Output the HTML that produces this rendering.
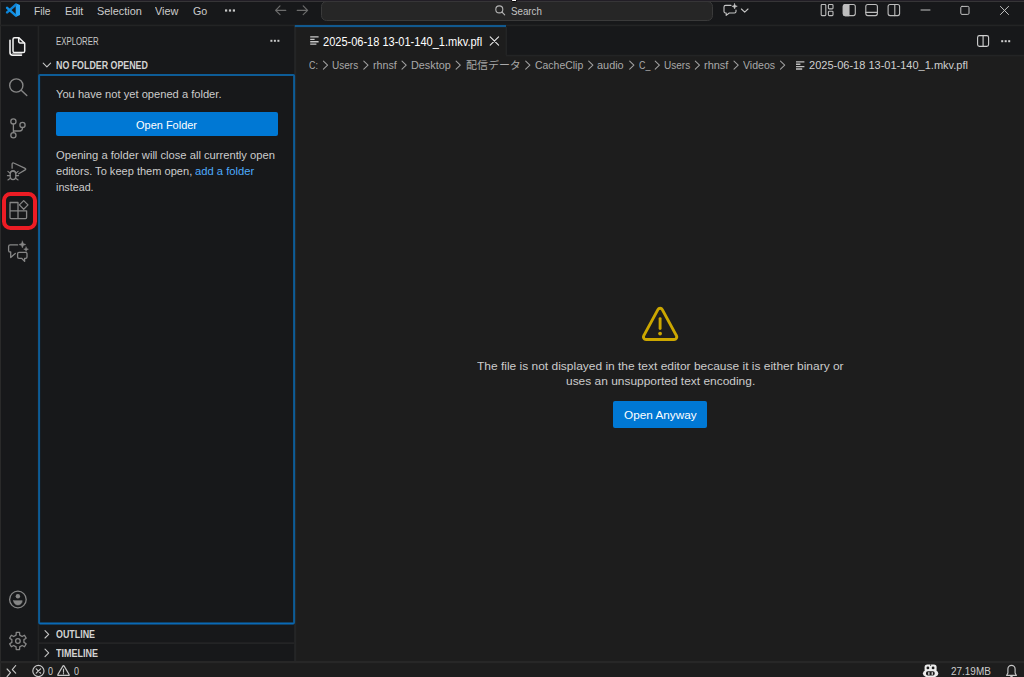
<!DOCTYPE html>
<html lang="en">
<head>
<meta charset="utf-8">
<title>2025-06-18 13-01-140_1.mkv.pfl - Visual Studio Code</title>
<style>
html,body{margin:0;padding:0}
body{width:1024px;height:677px;overflow:hidden;background:#17181a;position:relative;
 font-family:"Liberation Sans","Noto Sans CJK JP",sans-serif;color:#ccc;-webkit-font-smoothing:antialiased}
div,span,a,button,svg{position:absolute;box-sizing:border-box}
.t{white-space:nowrap;line-height:20px;transform-origin:0 0;display:block}
#titlebar{left:0;top:0;width:1024px;height:26px;background:#17181a}
#winTop0{left:0;top:0;width:1024px;height:1px;background:#221e26}
#winTop1{left:0;top:1px;width:1024px;height:1px;background:#363537}
#winLeft{left:0;top:1px;width:1px;height:676px;background:#2a2a2a}
#cursor{left:511px;top:0;width:6px;height:2px;background:#fff;border:1px solid #000;border-top:0;border-radius:0 0 2px 2px}
#cmd{left:321px;top:1px;width:392px;height:20px;background:#262626;border:1px solid #3a3a3a;border-radius:5.5px}
#activity{left:0;top:26px;width:39px;height:635px;background:#17181a}
#sidebar{left:39px;top:26px;width:256px;height:635px;background:#17181a}
#focus{left:-1px;top:48px;width:257px;height:550px}
#openFolder{left:16.5px;top:86px;width:222.5px;height:24px;background:#0078d4;border-radius:2px;border:0;padding:0}
#outlineHdr{left:0;top:598px;width:255px;height:19px}
#timelineHdr{left:0;top:617px;width:255px;height:18px}
#editor{left:295px;top:26px;width:729px;height:635px;background:#1d1d1d}
#tabs{left:0;top:0;width:729px;height:30px;background:#17181a}
#tab{left:0;top:0;width:210.5px;height:30px;background:#1d1d1d}
#openAnyway{left:318px;top:374.7px;width:94px;height:27px;background:#0078d4;border-radius:2px;border:0;padding:0}
#status{left:0;top:661px;width:1024px;height:16px;background:#1d1d1d}
#icons{left:0;top:0;width:1024px;height:677px;pointer-events:none}
#annot{left:2.2px;top:191.5px;width:34.7px;height:38.8px;border:4.5px solid #ed1c24;border-radius:8.5px}

</style>
</head>
<body>
<div id="titlebar"></div>
<div id="cmd"></div>
<div id="activity"></div>
<div id="sidebar">
  <div id="outlineHdr"></div>
  <div id="timelineHdr"></div>
  <div id="focus"></div>
  <button id="openFolder"></button>
</div>
<div id="editor">
  <div id="tabs"><div id="tab"></div></div>
  <button id="openAnyway"></button>
</div>
<div id="status"></div>
<div id="winTop0"></div><div id="winTop1"></div><div id="winLeft"></div>
<div id="cursor"></div>
<div id="annot"></div>
<svg id="icons" width="1024" height="677" viewBox="0 0 1024 677" fill="none" stroke-linecap="round" stroke-linejoin="round">
<g stroke="none" fill="#232425">
<rect x="0" y="24.6" width="1024" height="1.6"/>
<rect x="37.6" y="26" width="1.6" height="635.5"/>
<rect x="294.1" y="26" width="2.1" height="635.5" fill="#242526"/>
<rect x="39" y="642.2" width="255.2" height="1.9"/>
<rect x="505.5" y="27" width="1.5" height="28" />
<rect x="506" y="54.8" width="518" height="1.6"/>
<rect x="0" y="661" width="1024" height="2.1" fill="#272727"/>
</g>
<rect x="294.8" y="25" width="211.2" height="2.1" fill="#11598f" stroke="none"/>
<rect x="39.1" y="74.9" width="255" height="548.5" rx="0.8" stroke="#0d5c97" stroke-width="2" stroke-linejoin="miter"/>
<rect x="39.5" y="622.8" width="254.2" height="1.4" fill="#0a69b6" stroke="none"/>
<g stroke="none">
<path d="M15.7 3.2 L20 5.1 V15.1 L15.7 17 Z" fill="#27a0f0"/>
</g>
<path d="M15.6 4.9 L7.1 12.4" stroke="#0c84d8" stroke-width="2.5"/>
<path d="M15.6 15.4 L7.1 7.9" stroke="#0f8fe4" stroke-width="2.5"/>
<g fill="#c8c8c8" stroke="none"><rect x="225" y="9.4" width="2.2" height="2.2"/><rect x="228.9" y="9.4" width="2.2" height="2.2"/><rect x="232.8" y="9.4" width="2.2" height="2.2"/></g>
<g stroke="#6c6c6c" stroke-width="1.2"><path d="M285.8 10.3 H275.6 M280 5.9 L275.6 10.3 L280 14.7"/><path d="M297.2 10.3 H307.6 M303.2 5.9 L307.6 10.3 L303.2 14.7"/></g>
<g stroke="#b4b4b4" stroke-width="1.1"><circle cx="499.3" cy="9.4" r="3.5"/><path d="M501.9 12 L504.7 14.8"/></g>
<g stroke="#c5c5c5" stroke-width="1.1"><path d="M731 5.4 H725.6 a1.6 1.6 0 0 0 -1.6 1.6 V11.4 a1.6 1.6 0 0 0 1.6 1.6 H726.2 V15.4 L729.3 13 H734.4 a1.6 1.6 0 0 0 1.6 -1.6 V10"/><path d="M734.6 3.6 L735.3 5.6 L737.3 6.3 L735.3 7 L734.6 9 L733.9 7 L731.9 6.3 L733.9 5.6 Z" fill="#c5c5c5" stroke-width="0.5"/><path d="M741.4 9 L744.7 12.2 L748 9"/></g>
<g stroke="#bdbdbd" stroke-width="1.1">
<rect x="821.2" y="4.5" width="4.6" height="11.1" rx="0.8"/><rect x="828.4" y="4.5" width="4.6" height="4.4" rx="0.8"/><rect x="828.4" y="11.3" width="4.6" height="4.3" rx="0.8"/>
<rect x="843.3" y="4.5" width="12" height="11.1" rx="2"/><path d="M845.3 4.5 H849 V15.6 H845.3 a2 2 0 0 1 -2 -2 V6.5 a2 2 0 0 1 2 -2 Z" fill="#bdbdbd"/>
<rect x="865.8" y="4.5" width="11.6" height="11.1" rx="2"/><path d="M865.8 12.4 H877.4"/>
<rect x="888.1" y="4.5" width="11.5" height="11.1" rx="2"/><path d="M894.8 4.5 V15.6"/>
</g>
<g stroke="#c2c2c2" stroke-width="1"><path d="M921 10 H930"/><rect x="960.8" y="6.4" width="8.2" height="8" rx="1.2"/><path d="M1000.2 6.1 L1008.8 14.8 M1008.8 6.1 L1000.2 14.8" stroke-linecap="butt"/></g>
<g stroke="#f2f2f2" stroke-width="1.5"><path d="M14.6 37.7 H18.9 L24.7 43.2 V50.9 a1.6 1.6 0 0 1 -1.6 1.6 H14.6 a1.6 1.6 0 0 1 -1.6 -1.6 V39.3 a1.6 1.6 0 0 1 1.6 -1.6 Z"/><path d="M18.7 37.9 V41.6 a1.4 1.4 0 0 0 1.4 1.4 H24.4"/><path d="M10 40.2 V52.6 a2.6 2.6 0 0 0 2.6 2.6 H21.4" stroke-width="1.6"/><path d="M12.6 54 H21.6" stroke="#b8b8b8" stroke-width="1.3"/></g>
<g stroke="#868686" stroke-width="1.4"><circle cx="16.3" cy="85.5" r="6.6"/><path d="M21.2 90.3 L26.8 95.6"/></g>
<g stroke="#868686" stroke-width="1.3"><circle cx="13.4" cy="121.4" r="2.6"/><circle cx="13.4" cy="135.3" r="2.6"/><circle cx="22.5" cy="124.9" r="2.6"/><path d="M13.4 124.1 V132.6"/><path d="M22.5 127.6 V128 a3 3 0 0 1 -3 3 H13.6"/></g>
<g stroke="#868686" stroke-width="1.3"><path d="M12.1 168.2 V164 a1.1 1.1 0 0 1 1.6 -1 L25.2 168.4 a0.8 0.8 0 0 1 0 1.5 L18.7 173.7"/><path d="M10.2 174 a2.8 2.8 0 0 1 5.6 0 V176.8 a2.8 2.8 0 0 1 -5.6 0 Z"/><path d="M10.6 172.4 a2.5 2.5 0 0 1 4.8 0" /><path d="M10.2 173.2 L7.9 171.4 M15.8 173.2 L18.1 171.4 M10.2 175.6 H7.4 M15.8 175.6 H18.6 M10.4 178.2 L7.9 180 M15.6 178.2 L18.1 180" stroke-width="1.1"/></g>
<g stroke="#868686" stroke-width="1.3"><path d="M10 202.5 H18 V218.6 H11 a1 1 0 0 1 -1 -1 V203.5 a1 1 0 0 1 1 -1 Z M10 210.8 H26.6 V217.6 a1 1 0 0 1 -1 1 H18"/><path d="M23.7 200.6 L28 204.9 L23.7 209.2 L19.4 204.9 Z"/></g>
<g stroke="#868686" stroke-width="1.3"><path d="M17.6 244.9 H10.2 a1.6 1.6 0 0 0 -1.6 1.6 V250.4 a1.6 1.6 0 0 0 1.6 1.6 H10.7 V257.5 L15.3 253.4"/><path d="M19 252.4 H25.6 a1.4 1.4 0 0 1 1.4 1.4 V256.9 a1.4 1.4 0 0 1 -1.4 1.4 H24.6 V261.4 L21.6 258.3 H19 a1.4 1.4 0 0 1 -1.4 -1.4 V253.8 a1.4 1.4 0 0 1 1.4 -1.4 Z"/><path d="M22.4 241 L23.4 243.5 L25.9 244.5 L23.4 245.5 L22.4 248 L21.4 245.5 L18.9 244.5 L21.4 243.5 Z" fill="#868686" stroke-width="0.4"/><path d="M26.1 246.8 L26.8 248.5 L28.5 249.2 L26.8 249.9 L26.1 251.6 L25.4 249.9 L23.7 249.2 L25.4 248.5 Z" fill="#868686" stroke-width="0.4"/></g>
<g stroke="#868686" stroke-width="1.3"><circle cx="17.9" cy="599.5" r="8.3"/><circle cx="17.9" cy="596.3" r="2.2" fill="#868686" stroke="none"/><path d="M13.6 600.7 H22.2 a4.3 4.3 0 0 1 -8.6 0 Z" fill="#868686" stroke-width="0.6"/></g>
<g stroke="#868686" stroke-width="1.3"><path d="M16.09 635.07 L16.24 632.46 L19.56 632.46 L19.71 635.07 L22.13 636.47 L24.47 635.29 L26.13 638.17 L23.94 639.61 L23.94 642.39 L26.13 643.83 L24.47 646.71 L22.13 645.53 L19.71 646.93 L19.56 649.54 L16.24 649.54 L16.09 646.93 L13.67 645.53 L11.33 646.71 L9.67 643.83 L11.86 642.39 L11.86 639.61 L9.67 638.17 L11.33 635.29 L13.67 636.47 Z"/><circle cx="17.9" cy="641.0" r="2.3"/></g>
<g fill="#c8c8c8" stroke="none"><rect x="270.4" y="39.8" width="2" height="2"/><rect x="273.9" y="39.8" width="2" height="2"/><rect x="277.4" y="39.8" width="2" height="2"/></g>
<g stroke="#c5c5c5" stroke-width="1.1"><path d="M43.2 63.2 L46.9 66.9 L50.6 63.2"/><path d="M45 630.6 L48.7 634.3 L45 638"/><path d="M45 649.2 L48.7 652.9 L45 656.6"/></g>
<g stroke="#c8c8c8" stroke-width="1.35" stroke-linecap="butt"><path d="M310.2 36.90 H318.60 M310.2 39.30 H314.60 M310.2 41.70 H318.60 M310.2 44.10 H316.40"/></g>
<g stroke="#c0c0c0" stroke-width="1.35" stroke-linecap="butt"><path d="M796 61.80 H804.40 M796 64.20 H800.40 M796 66.60 H804.40 M796 69.00 H802.20"/></g>
<g stroke="#e8e8e8" stroke-width="1.1"><path d="M490.2 36.8 L498.6 45.2 M498.6 36.8 L490.2 45.2"/></g>
<path d="M323.40000000000003 61.1 L327.6 65.1 L323.40000000000003 69.1 M363.8 61.1 L368.0 65.1 L363.8 69.1 M402.0 61.1 L406.2 65.1 L402.0 69.1 M456.1 61.1 L460.3 65.1 L456.1 69.1 M525.6999999999999 61.1 L529.9 65.1 L525.6999999999999 69.1 M588.6999999999999 61.1 L592.9 65.1 L588.6999999999999 69.1 M629.6999999999999 61.1 L633.9 65.1 L629.6999999999999 69.1 M655.1999999999999 61.1 L659.4 65.1 L655.1999999999999 69.1 M695.3 61.1 L699.5 65.1 L695.3 69.1 M734.0 61.1 L738.2 65.1 L734.0 69.1 M780.5 61.1 L784.7 65.1 L780.5 69.1" stroke="#a0a0a0" stroke-width="1.05"/>
<g stroke="#d0d0d0" stroke-width="1.1"><rect x="977.6" y="35.6" width="11" height="10.8" rx="1.8"/><path d="M983.1 35.6 V46.4"/></g>
<g fill="#d0d0d0" stroke="none"><rect x="1001.2" y="40.2" width="2" height="2"/><rect x="1004.7" y="40.2" width="2" height="2"/><rect x="1008.2" y="40.2" width="2" height="2"/></g>
<g stroke="#cca700" stroke-width="2.9"><path d="M657.9 309.6 a2.5 2.5 0 0 1 4.4 0 L676.4 335.6 a2.6 2.6 0 0 1 -2.3 3.9 H646.1 a2.6 2.6 0 0 1 -2.3 -3.9 Z"/><path d="M660.1 318.6 V328.6" stroke-width="2.9"/></g><circle cx="660.1" cy="333.6" r="1.9" fill="#cca700"/>
<g stroke="#c8c8c8" stroke-width="1.15"><path d="M15.7 665.5 L12.3 669.6 L15.7 673.2"/><path d="M7.1 669 L10.5 672.6 L7.1 676.6"/>
<circle cx="38.4" cy="671" r="5.6"/><path d="M36.2 668.8 L40.6 673.2 M40.6 668.8 L36.2 673.2"/>
<path d="M63 665.9 a0.6 0.6 0 0 1 1 0 L69.2 674.6 a0.5 0.5 0 0 1 -0.4 0.8 H58.2 a0.5 0.5 0 0 1 -0.4 -0.8 Z"/><path d="M63.5 669 V672.2 M63.5 673.6 V673.8"/>
<path d="M1011.5 665.4 a3.6 3.6 0 0 1 3.6 3.6 V673 L1016.4 675.4 H1006.6 L1007.9 673 V669 a3.6 3.6 0 0 1 3.6 -3.6 Z"/><path d="M1010.2 675.6 a1.4 1.4 0 0 0 2.6 0" />
</g>
<g stroke="none" fill="#ececec"><rect x="924.6" y="664.6" width="12" height="7.4" rx="2.7"/><ellipse cx="930.6" cy="673.4" rx="7.7" ry="4.4"/></g>
<g stroke="none" fill="#1d1d1d"><circle cx="927.9" cy="667.9" r="1.4"/><circle cx="933.1" cy="667.9" r="1.4"/><rect x="926" y="671.3" width="8.7" height="4.1" rx="1.7"/><path d="M930.1 664.4 H931.1 V665.6 L930.6 666.1 L930.1 665.6 Z"/></g>
<g stroke="none" fill="#e0e0e0"><rect x="928.2" y="672.2" width="1.3" height="2.6"/><rect x="931.6" y="672.2" width="1.3" height="2.6"/></g>
</svg>
<span class="t" style="left:34.3px;top:1px;font-size:11.8px;color:#cccccc;transform:scaleX(0.8730)">File</span>
<span class="t" style="left:64.8px;top:1px;font-size:11.8px;color:#cccccc;transform:scaleX(0.9002)">Edit</span>
<span class="t" style="left:96.8px;top:1px;font-size:11.8px;color:#cccccc;transform:scaleX(0.9252)">Selection</span>
<span class="t" style="left:155.4px;top:1px;font-size:11.8px;color:#cccccc;transform:scaleX(0.9227)">View</span>
<span class="t" style="left:192.5px;top:1px;font-size:11.8px;color:#cccccc;transform:scaleX(0.9079)">Go</span>
<span class="t" style="left:510.6px;top:1px;font-size:11.8px;color:#c4c4c4;transform:scaleX(0.8264)">Search</span>
<span class="t" style="left:322.9px;top:32px;font-size:12px;color:#ffffff;transform:scaleX(0.9184)">2025-06-18 13-01-140_1.mkv.pfl</span>
<span class="t" style="left:309.0px;top:55px;font-size:11.8px;color:#a9a9a9;transform:scaleX(0.7534)">C:</span>
<span class="t" style="left:332.4px;top:55px;font-size:11.8px;color:#a9a9a9;transform:scaleX(0.8503)">Users</span>
<span class="t" style="left:373.2px;top:55px;font-size:11.8px;color:#a9a9a9;transform:scaleX(0.9072)">rhnsf</span>
<span class="t" style="left:411.4px;top:55px;font-size:11.8px;color:#a9a9a9;transform:scaleX(0.9173)">Desktop</span>
<span class="t" style="left:534.9px;top:55px;font-size:11.8px;color:#a9a9a9;transform:scaleX(0.8854)">CacheClip</span>
<span class="t" style="left:597.3px;top:55px;font-size:11.8px;color:#a9a9a9;transform:scaleX(0.9247)">audio</span>
<span class="t" style="left:638.7px;top:55px;font-size:11.8px;color:#a9a9a9;transform:scaleX(0.7553)">C_</span>
<span class="t" style="left:664.1px;top:55px;font-size:11.8px;color:#a9a9a9;transform:scaleX(0.8503)">Users</span>
<span class="t" style="left:704.4px;top:55px;font-size:11.8px;color:#a9a9a9;transform:scaleX(0.9263)">rhnsf</span>
<span class="t" style="left:743.1px;top:55px;font-size:11.8px;color:#a9a9a9;transform:scaleX(0.8952)">Videos</span>
<span class="t" style="left:465.5px;top:56px;font-size:10.2px;color:#a9a9a9;transform:scaleX(1.0758)">配信データ</span>
<span class="t" style="left:809.0px;top:55px;font-size:11.8px;color:#cfcfcf;transform:scaleX(0.9337)">2025-06-18 13-01-140_1.mkv.pfl</span>
<span class="t" style="left:55.8px;top:32px;font-size:10.2px;color:#c8c8c8;transform:scaleX(0.7678)">EXPLORER</span>
<span class="t" style="left:55.8px;top:56px;font-size:10.2px;color:#d4d4d4;transform:scaleX(0.8681);font-weight:700">NO FOLDER OPENED</span>
<span class="t" style="left:55.8px;top:84px;font-size:11.8px;color:#cccccc;transform:scaleX(0.9438)">You have not yet opened a folder.</span>
<span class="t" style="left:135.8px;top:115px;font-size:11.8px;color:#ffffff;transform:scaleX(0.9302)">Open Folder</span>
<span class="t" style="left:55.8px;top:145px;font-size:11.8px;color:#cccccc;transform:scaleX(0.9483)">Opening a folder will close all currently open</span>
<span class="t" style="left:55.8px;top:161px;font-size:11.8px;color:#cccccc;transform:scaleX(0.9369)">editors. To keep them open,</span>
<span class="t" style="left:195.4px;top:161px;font-size:11.8px;color:#4daafc;transform:scaleX(0.9501)">add a folder</span>
<span class="t" style="left:55.8px;top:177px;font-size:11.8px;color:#cccccc;transform:scaleX(0.9098)">instead.</span>
<span class="t" style="left:55.8px;top:625px;font-size:10.2px;color:#d4d4d4;transform:scaleX(0.8721);font-weight:700">OUTLINE</span>
<span class="t" style="left:56.3px;top:644px;font-size:10.2px;color:#d4d4d4;transform:scaleX(0.8833);font-weight:700">TIMELINE</span>
<span class="t" style="left:477.2px;top:356px;font-size:11.8px;color:#cccccc;transform:scaleX(1.0146)">The file is not displayed in the text editor because it is either binary or</span>
<span class="t" style="left:565.7px;top:371px;font-size:11.8px;color:#cccccc;transform:scaleX(1.0122)">uses an unsupported text encoding.</span>
<span class="t" style="left:624.3px;top:405px;font-size:11.8px;color:#ffffff;transform:scaleX(0.9973)">Open Anyway</span>
<span class="t" style="left:48.4px;top:661px;font-size:10.6px;color:#cccccc;transform:scaleX(0.8466)">0</span>
<span class="t" style="left:73.8px;top:661px;font-size:10.6px;color:#cccccc;transform:scaleX(0.8466)">0</span>
<span class="t" style="left:950.9px;top:661px;font-size:10.6px;color:#cccccc;transform:scaleX(0.9385)">27.19MB</span>

</body>
</html>
